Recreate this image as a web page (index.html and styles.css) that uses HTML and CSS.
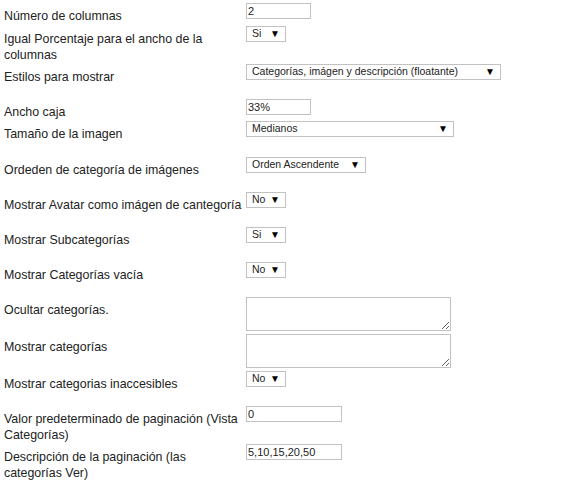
FILE: index.html
```html
<!DOCTYPE html>
<html lang="es">
<head>
<meta charset="utf-8">
<link rel="stylesheet" href="styles.css">
</head>
<body>
<div class="form">
  <div class="row g2">
    <div class="lbl">Número de columnas</div>
    <div class="ctl"><input class="in in-s" type="text" value="2"></div>
  </div>
  <div class="row g1">
    <div class="lbl">Igual Porcentaje para el ancho de la columnas</div>
    <div class="ctl"><div class="sel sel-xs"><span>Si</span><span class="arr">▼</span></div></div>
  </div>
  <div class="row g14">
    <div class="lbl">Estilos para mostrar</div>
    <div class="ctl"><div class="sel sel-xl"><span>Categorías, imágen y descripción (floatante)</span><span class="arr">▼</span></div></div>
  </div>
  <div class="row g1">
    <div class="lbl">Ancho caja</div>
    <div class="ctl"><input class="in in-s" type="text" value="33%"></div>
  </div>
  <div class="row g15">
    <div class="lbl">Tamaño de la imagen</div>
    <div class="ctl"><div class="sel sel-l"><span>Medianos</span><span class="arr">▼</span></div></div>
  </div>
  <div class="row g14">
    <div class="lbl">Ordeden de categoría de imágenes</div>
    <div class="ctl"><div class="sel sel-m"><span>Orden Ascendente</span><span class="arr">▼</span></div></div>
  </div>
  <div class="row g14">
    <div class="lbl">Mostrar Avatar como imágen de cantegoría</div>
    <div class="ctl"><div class="sel sel-xs"><span>No</span><span class="arr">▼</span></div></div>
  </div>
  <div class="row g14">
    <div class="lbl">Mostrar Subcategorías</div>
    <div class="ctl"><div class="sel sel-xs"><span>Si</span><span class="arr">▼</span></div></div>
  </div>
  <div class="row g14">
    <div class="lbl">Mostrar Categorías vacía</div>
    <div class="ctl"><div class="sel sel-xs"><span>No</span><span class="arr">▼</span></div></div>
  </div>
  <div class="row g3">
    <div class="lbl">Ocultar categorías.</div>
    <div class="ctl"><textarea class="ta"></textarea></div>
  </div>
  <div class="row g3">
    <div class="lbl">Mostrar categorías</div>
    <div class="ctl"><textarea class="ta"></textarea></div>
  </div>
  <div class="row g14">
    <div class="lbl">Mostrar categorias inaccesibles</div>
    <div class="ctl"><div class="sel sel-xs"><span>No</span><span class="arr">▼</span></div></div>
  </div>
  <div class="row g1">
    <div class="lbl">Valor predeterminado de paginación (Vista Categorías)</div>
    <div class="ctl"><input class="in in-w" type="text" value="0"></div>
  </div>
  <div class="row g1">
    <div class="lbl">Descripción de la paginación (las categorías Ver)</div>
    <div class="ctl"><input class="in in-w" type="text" value="5,10,15,20,50"></div>
  </div>
</div>
</body>
</html>
```

FILE: styles.css
```css
html, body {
  margin: 0;
  padding: 0;
  background: #ffffff;
}

body {
  font-family: "Liberation Sans", Arial, sans-serif;
  color: #222222;
}

.form {
  padding: 3px 0 0 4px;
}

.row {
  display: flex;
  align-items: flex-start;
}

.g1 { margin-bottom: 1px; }
.g2 { margin-bottom: 2px; }
.g3 { margin-bottom: 3px; }
.g14 { margin-bottom: 14px; }
.g15 { margin-bottom: 15px; }

.lbl {
  flex: none;
  width: 240px;
  margin-right: 2px;
  padding-top: 5px;
  font-size: 12.4px;
  line-height: 16px;
}

.ctl {
  display: flex;
}

.in {
  box-sizing: border-box;
  height: 16px;
  margin: 0;
  padding: 0 1px;
  border: 1px solid #c2c2c2;
  background: #ffffff;
  font-family: "Liberation Sans", Arial, sans-serif;
  font-size: 11px;
  color: #222222;
  outline: none;
}

.in-s { width: 65px; }
.in-w { width: 96px; }

.sel {
  box-sizing: border-box;
  height: 16px;
  display: flex;
  align-items: center;
  justify-content: space-between;
  padding: 0 5px 1px 5px;
  border: 1px solid #c2c2c2;
  background: #ffffff;
  font-size: 10.5px;
  line-height: 13px;
  color: #222222;
  white-space: nowrap;
}

.sel-xs { width: 40px; }
.sel-m { width: 120px; }
.sel-l { width: 208px; }
.sel-xl { width: 255px; }

.arr {
  font-size: 10px;
  color: #000000;
}

.ta {
  box-sizing: border-box;
  width: 205px;
  height: 34px;
  margin: 0;
  padding: 1px;
  border: 1px solid #c2c2c2;
  background: #ffffff;
  font-family: "Liberation Sans", Arial, sans-serif;
  font-size: 11px;
  resize: both;
  outline: none;
}
```
